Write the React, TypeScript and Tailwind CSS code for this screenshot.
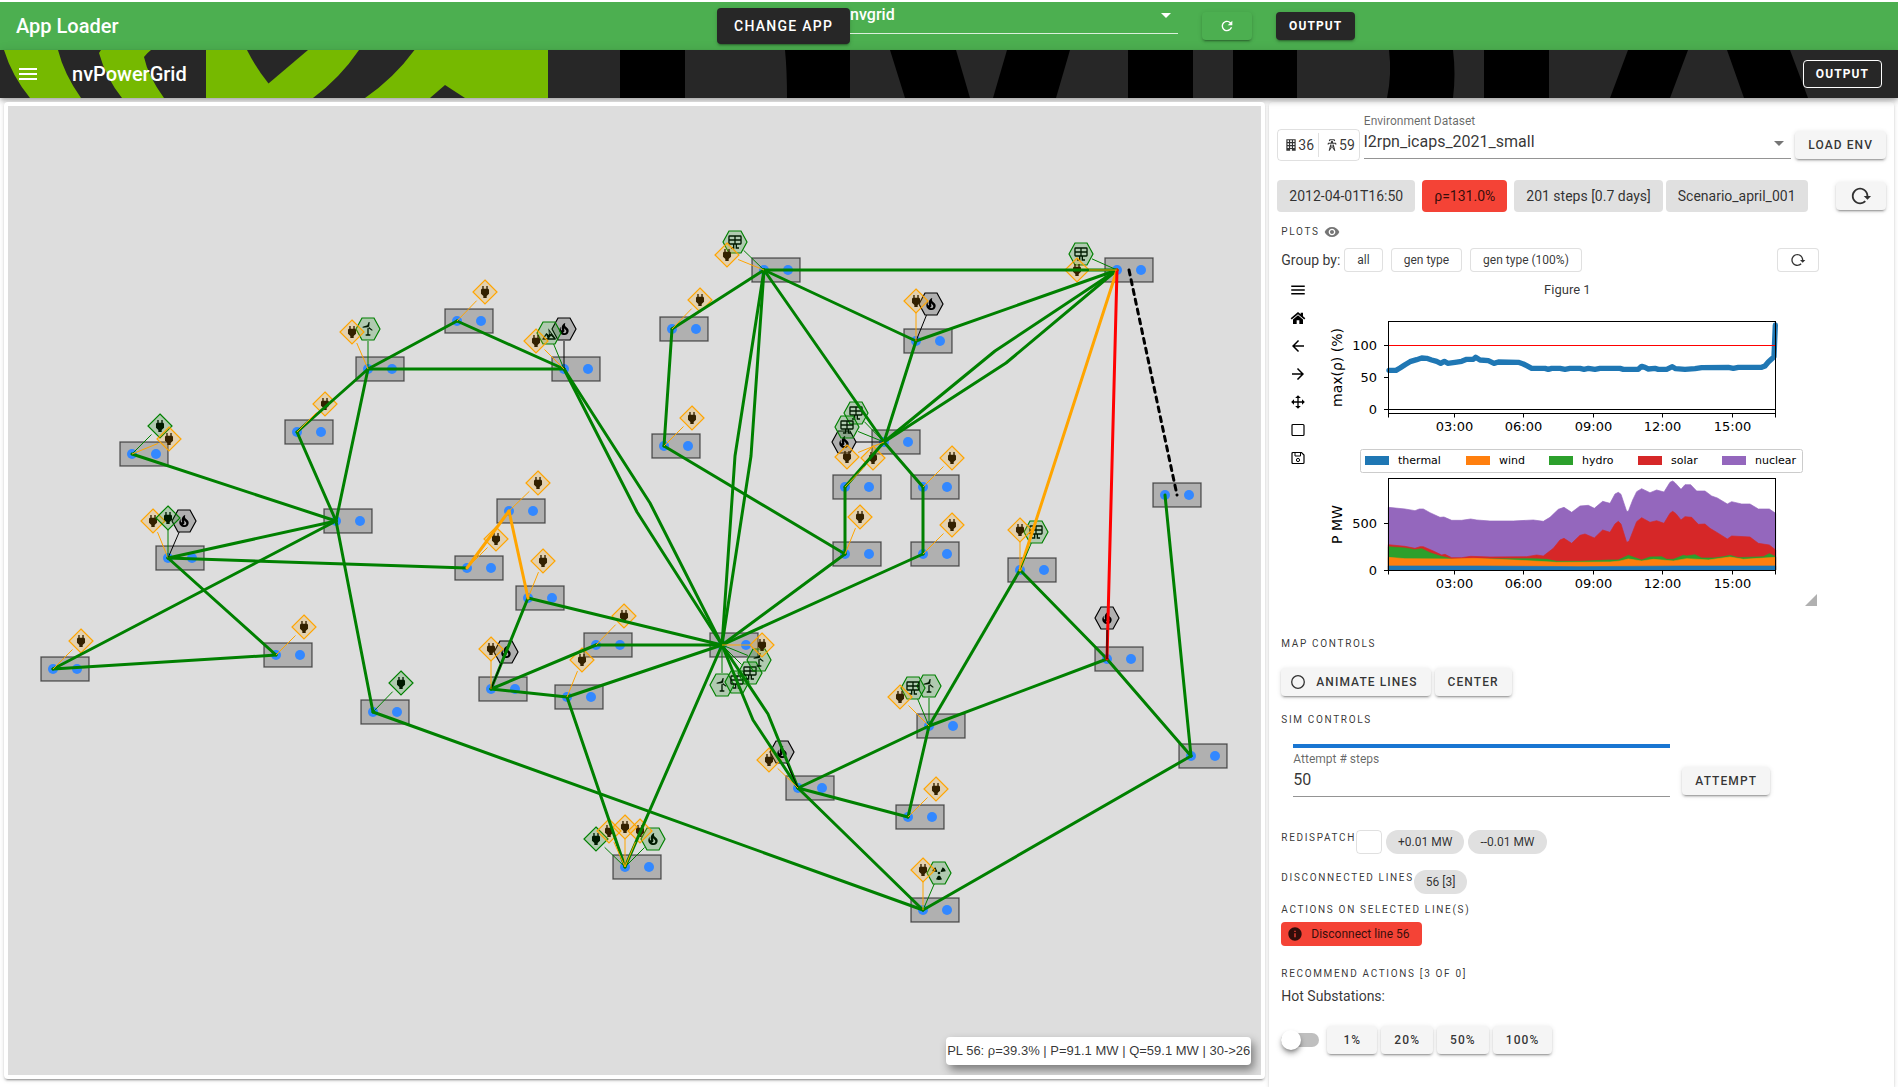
import React from "react";
import { MdRefresh, MdMenu, MdArrowDropDown, MdRemoveRedEye, MdInfo, MdArrowBack, MdArrowForward } from "react-icons/md";

type Pt = [number, number];

const RELOAD =
  "M2 12C2 16.97 6.03 21 11 21C13.39 21 15.68 20.06 17.4 18.4L15.9 16.9C14.63 18.25 12.86 19 11 19C4.76 19 1.64 11.46 6.05 7.05C10.46 2.64 18 5.77 18 12H15L19 16H19.1L23 12H20C20 7.03 15.97 3 11 3C6.03 3 2 7.03 2 12Z";
const TOWER =
  "M8.28,5.45L6.5,4.55L7.76,2H16.23L17.5,4.55L15.72,5.44L15,4H9L8.28,5.45M18.62,8H14.09L13.3,5H10.7L9.91,8H5.38L4.1,10.55L5.89,11.44L6.62,10H17.38L18.1,11.45L19.89,10.56L18.62,8M17.77,22H15.7L15.46,21.1L12,15.9L8.53,21.1L8.3,22H6.23L9.12,11H11.19L10.83,12.35L12,14.1L13.16,12.35L12.81,11H14.88L17.77,22M11.4,15L10.5,13.65L9.32,18.13L11.4,15M14.68,18.12L13.5,13.64L12.6,15L14.68,18.12Z";
const BUILDING =
  "M4,2H20V22H4V2M6,4V7H8.5V4H6M10.5,4V7H13.5V4H10.5M15.500,4V7H18V4H15.5M6,9V12H8.5V9H6M10.5,9V12H13.5V9H10.5M15.5,9V12H18V9H15.5M6,14V17H8.5V14H6M10.5,14V17H13.5V14H10.5M15.5,14V17H18V14H15.5M10.5,19V22H13.5V19H10.5Z";
const HOME =
  "M12,3L1,12.300L2.600,14.100L12,6.200L21.400,14.100L23,12.300L19.500,9.300V4H16V6.400L12,3M12,7.800L4.500,14.100V21H10V15.500H14V21H19.500V14.100L12,7.800Z";
const MOVE =
  "M13,6V11H18V7.75L22.25,12L18,16.25V13H13V18H16.25L12,22.25L7.75,18H11V13H6V16.25L1.75,12L6,7.75V11H11V6H7.75L12,1.75L16.25,6H13Z";

const PLUG = "M16,7V3H14V7H10V3H8V7H8C7,7 6,8 6,9V14.5L9.5,18V21H14.5V18L18,14.5V9C18,8 17,7 16,7Z";
const FIRE =
  "M17.66 11.2C17.43 10.9 17.15 10.64 16.89 10.38C16.22 9.78 15.46 9.35 14.82 8.72C13.33 7.26 13 4.85 13.95 3C13 3.23 12.17 3.75 11.46 4.32C8.87 6.4 7.85 10.07 9.07 13.22C9.11 13.32 9.15 13.42 9.15 13.55C9.15 13.77 9 13.97 8.8 14.05C8.57 14.15 8.33 14.09 8.14 13.93C8.08 13.88 8.04 13.83 8 13.76C6.87 12.33 6.69 10.28 7.45 8.64C5.78 10 4.87 12.3 5 14.47C5.06 14.97 5.12 15.47 5.29 15.97C5.43 16.57 5.7 17.17 6 17.7C7.08 19.43 8.95 20.67 10.96 20.92C13.1 21.19 15.39 20.8 17.03 19.32C18.86 17.66 19.5 15 18.56 12.72L18.43 12.46C18.22 12 17.66 11.2 17.66 11.2M14.5 17.5C14.22 17.74 13.76 18 13.4 18.1C12.28 18.5 11.16 17.94 10.5 17.28C11.69 17 12.4 16.12 12.61 15.23C12.78 14.43 12.46 13.77 12.33 13C12.21 12.26 12.23 11.63 12.5 10.94C12.69 11.32 12.89 11.7 13.13 12C13.9 13 15.11 13.44 15.37 14.8C15.41 14.94 15.43 15.08 15.43 15.23C15.46 16.05 15.1 16.95 14.5 17.5H14.5Z";
const SOLAR =
  "M4,2H20A2,2 0 0,1 22,4V14A2,2 0 0,1 20,16H15V20H18V22H13V16H11V22H6V20H9V16H4A2,2 0 0,1 2,14V4A2,2 0 0,1 4,2M4,4V8H11V4H4M4,14H11V10H4V14M20,14V10H13V14H20M20,4H13V8H20V4Z";
const WIND = "M14.500,1.500L13.800,8.200L11.500,9.500L4,10V8.500L11,6.500L13,1.500H14.500M13.500,9L19,13.500L18,14.500L12.500,11L13.500,9M11,11H13V20H15.500V22H8.500V20H11V11Z";
const HYDRO = "M2,21L8,12L12,15L11,5L16,12L22,20V22H2V21M5,20H10L8,15L5,20M13,9V13L15,14L13,9M12,20L19,20L15,16L12,20Z";
const NUCLEAR = "M10,12A2,2 0 1,0 14,12A2,2 0 1,0 10,12M9,10.500L2,9.500C2.500,6.500 4.500,4.500 6.500,3.500L9.500,9.500M15,10.500L22,9.500C21.500,6.500 19.500,4.500 17.500,3.500L14.500,9.500M10.500,16L7.500,21.500C10,23 14,23 16.500,21.500L13.500,16Z";

const substations: Pt[] = [
  [132, 454], [168, 558], [53, 669], [276, 655], [297, 432], [368, 369], [336, 521], [373, 712], [457, 321],
  [564, 369], [509, 511], [467, 568], [528, 598], [596, 645], [491, 689], [567, 697], [722, 645], [764, 270],
  [672, 329], [664, 446], [916, 341], [884, 442], [845, 487], [923, 487], [845, 554], [923, 554], [1117, 270],
  [1165, 495], [1020, 570], [1107, 659], [929, 726], [908, 817], [1191, 756], [923, 910], [798, 788], [625, 867],
];

const greenLines: string[] = [
  "132,454 336,521", "168,558 336,521", "168,558 467,568", "168,558 276,655", "53,669 336,521", "53,669 276,655",
  "297,432 368,369", "297,432 336,521", "368,369 336,521", "368,369 457,321", "368,369 564,369", "457,321 564,369",
  "336,521 373,712", "373,712 923,910", "564,369 637,512 722,645", "564,369 650,503 722,645",
  "764,270 735,456 722,645", "764,270 751,456 722,645", "528,598 491,689", "528,598 722,645", "596,645 491,689",
  "596,645 722,645", "491,689 567,697", "567,697 722,645", "567,697 625,867", "722,645 625,867", "722,645 845,554",
  "722,645 923,554", "722,645 753,720 798,788", "722,645 768,714 798,788", "764,270 672,329", "672,329 664,446",
  "664,446 845,554", "764,270 1117,270", "764,270 916,341", "764,270 884,442", "916,341 1117,270",
  "916,341 884,442", "884,442 995,351 1117,270", "884,442 1006,363 1117,270", "884,442 845,487", "884,442 923,487",
  "845,487 845,554", "923,487 923,554", "1165,495 1191,756", "1020,570 1107,659", "1020,570 929,726",
  "1107,659 929,726", "1107,659 1191,756", "929,726 798,788", "929,726 908,817", "908,817 798,788",
  "798,788 923,910", "1191,756 923,910",
];
const orangeLines: string[] = ["509,511 467,568", "509,511 528,598", "1117,270 1020,570"];

type Kind = "load" | "store" | "fire" | "biofire" | "solar" | "wind" | "hydro" | "nuclear";
type Marker = { kind: Kind; at: Pt; bus: number };
const m = (kind: Kind, x: number, y: number, bus: number): Marker => ({ kind, at: [x, y], bus });

const markers: Marker[] = [
  m("store", 160, 426, 0), m("load", 169, 439, 0), m("fire", 184, 521, 1), m("load", 153, 521, 1), m("store", 168, 518, 1),
  m("load", 81, 641, 2), m("load", 304, 627, 3), m("load", 325, 404, 4), m("wind", 368, 329, 5), m("load", 352, 332, 5),
  m("store", 401, 683, 7), m("load", 485, 292, 8), m("fire", 564, 329, 9), m("hydro", 549, 333, 9), m("load", 536, 341, 9),
  m("load", 538, 483, 10), m("load", 496, 539, 11), m("load", 543, 561, 12), m("load", 624, 616, 13),
  m("fire", 506, 652, 14), m("load", 491, 649, 14), m("load", 582, 660, 15), m("wind", 722, 685, 16),
  m("solar", 737, 682, 16), m("solar", 750, 673, 16), m("wind", 759, 660, 16), m("load", 762, 645, 16),
  m("solar", 735, 242, 17), m("load", 727, 255, 17), m("load", 700, 300, 18), m("load", 692, 418, 19),
  m("fire", 931, 304, 20), m("load", 916, 301, 20), m("solar", 856, 413, 21), m("fire", 844, 442, 21),
  m("solar", 847, 427, 21), m("load", 847, 457, 21), m("load", 873, 458, 22), m("load", 952, 458, 23),
  m("load", 860, 517, 24), m("load", 952, 525, 25), m("solar", 1081, 254, 26), m("load", 1077, 270, 26),
  m("solar", 1036, 532, 28), m("load", 1020, 530, 28), m("fire", 1107, 618, 29), m("wind", 929, 686, 30),
  m("solar", 913, 688, 30), m("load", 900, 697, 30), m("load", 936, 789, 31), m("nuclear", 939, 873, 33),
  m("load", 923, 870, 33), m("fire", 782, 752, 34), m("load", 769, 760, 34), m("store", 596, 839, 35),
  m("biofire", 653, 839, 35), m("load", 609, 831, 35), m("load", 640, 831, 35), m("load", 625, 827, 35),
];

const glyphs: Record<Kind, { d: string; color: string; shape: "diamond" | "hex" }> = {
  load: { d: PLUG, color: "#ffa500", shape: "diamond" },
  store: { d: PLUG, color: "#008000", shape: "diamond" },
  fire: { d: FIRE, color: "#000000", shape: "hex" },
  biofire: { d: FIRE, color: "#008000", shape: "hex" },
  solar: { d: SOLAR, color: "#008000", shape: "hex" },
  wind: { d: WIND, color: "#008000", shape: "hex" },
  hydro: { d: HYDRO, color: "#008000", shape: "hex" },
  nuclear: { d: NUCLEAR, color: "#008000", shape: "hex" },
};

function MarkerShape({ kind, at }: Marker) {
  const g = glyphs[kind];
  const points = g.shape === "diamond" ? "0,-12 12,0 0,12 -12,0" : "-12,0 -6,-11 6,-11 12,0 6,11 -6,11";
  return (
    <g transform={`translate(${at[0]} ${at[1]})`}>
      <path d={g.d} fill="#000" transform="scale(0.67) translate(-12 -12)" />
      <polygon points={points} fill={g.color} fillOpacity={0.2} stroke={g.color} strokeWidth={1.2} />
    </g>
  );
}

function Connector({ kind, at, bus }: Marker) {
  const [bx, by] = substations[bus];
  const dx = bx - at[0];
  const dy = by - at[1];
  const len = Math.hypot(dx, dy);
  const k = 12 / len;
  return (
    <line x1={at[0] + dx * k} y1={at[1] + dy * k} x2={bx} y2={by} stroke={glyphs[kind].color} strokeWidth={1} />
  );
}

function GridMap() {
  return (
    <svg className="absolute inset-0 size-full" role="img" aria-label="Power grid map">
      <g transform="translate(-8 -106)">
        {substations.map(([x, y]) => (
          <g key={`${x}-${y}`}>
            <rect x={x - 12} y={y - 12} width={48} height={24} fill="#000" fillOpacity={0.2} stroke="#000" strokeOpacity={0.6} strokeWidth={1.3} />
            <circle cx={x} cy={y} r={5} fill="#3388ff" />
            <circle cx={x + 24} cy={y} r={5} fill="#3388ff" />
          </g>
        ))}
        {markers.map((k, i) => (
          <MarkerShape key={i} {...k} />
        ))}
        {greenLines.map((p) => (
          <polyline key={p} points={p} fill="none" stroke="#008000" strokeWidth={3} strokeLinejoin="round" strokeLinecap="round" />
        ))}
        {orangeLines.map((p) => (
          <polyline key={p} points={p} fill="none" stroke="#ffa500" strokeWidth={3} strokeLinecap="round" />
        ))}
        <line x1={1117} y1={270} x2={1107} y2={659} stroke="#ff0000" strokeWidth={3} strokeLinecap="round" />
        <line x1={1129} y1={270} x2={1177} y2={495} stroke="#000" strokeWidth={3} strokeDasharray="5 5" strokeLinecap="round" />
        {markers.map((k, i) => (
          <Connector key={i} {...k} />
        ))}
      </g>
    </svg>
  );
}

const rhoLine =
  "27,211 48,211 60,204 75,194 90,185 110,179 125,174 140,175 155,180 170,184 182,190 193,184 203,190 225,187 245,184 260,178 280,178 287,172 300,180 325,182 342,190 355,186 415,187 430,192 440,197 455,205 495,205 505,208 515,205 540,205 555,208 570,205 600,205 612,208 625,205 645,208 660,205 720,205 730,208 775,208 785,199 795,202 805,207 825,205 835,208 860,208 877,200 887,206 915,208 945,206 965,203 1045,202 1060,205 1075,202 1145,202 1155,198 1165,186 1178,174 1182,170 1186,75";

const areas: { name: string; color: string; top: string }[] = [
  {
    name: "nuclear",
    color: "#9467bd",
    top: "25,622 75,627 105,632 118,627 130,627 150,638 180,652 192,651 215,661 245,661 272,657 290,660 330,663 400,663 460,660 490,664 510,652 535,628 552,622 575,637 600,618 625,616 643,625 668,604 690,610 705,582 715,577 723,583 740,634 745,634 758,600 770,575 785,566 810,578 830,570 852,576 870,547 878,543 885,548 903,568 915,554 932,554 950,573 975,573 995,588 1012,594 1042,612 1055,605 1085,612 1110,612 1135,627 1168,627 1187,640",
  },
  {
    name: "solar",
    color: "#d62728",
    top: "25,734 75,739 105,745 120,740 130,740 160,753 185,765 195,763 215,773 245,773 272,769 330,771 440,770 470,765 490,768 520,745 540,720 552,715 575,730 600,706 615,702 643,714 668,690 690,697 705,672 715,664 723,672 740,727 747,724 770,665 785,653 810,667 830,662 852,670 870,640 878,634 888,641 903,660 915,650 935,652 955,673 975,672 990,685 1012,698 1042,717 1055,708 1110,711 1135,730 1168,735 1187,750",
  },
  {
    name: "hydro",
    color: "#2ca02c",
    top: "25,740 75,744 105,749 125,746 150,758 180,768 205,774 215,778 400,776 460,776 500,778 530,784 600,784 690,780 715,780 745,766 765,773 785,780 810,771 845,770 860,778 880,778 910,766 920,768 945,764 965,774 1000,774 1030,770 1050,766 1075,773 1150,770 1168,761 1187,770",
  },
  {
    name: "wind",
    color: "#ff7f0e",
    top: "25,772 75,776 215,777 280,775 420,781 530,787 690,786 720,783 745,777 785,783 820,778 880,783 920,776 985,780 1050,771 1090,778 1187,772",
  },
  { name: "thermal", color: "#1f77b4", top: "25,798 300,798 600,800 900,798 1187,798" },
];

const legend: { name: string; color: string; x: number }[] = [
  { name: "thermal", color: "#1f77b4", x: 49 },
  { name: "wind", color: "#ff7f0e", x: 150 },
  { name: "hydro", color: "#2ca02c", x: 233 },
  { name: "solar", color: "#d62728", x: 322 },
  { name: "nuclear", color: "#9467bd", x: 406 },
];

const hours: { label: string; x: number }[] = [
  { label: "03:00", x: 138.5 },
  { label: "06:00", x: 207.5 },
  { label: "09:00", x: 277.5 },
  { label: "12:00", x: 346.5 },
  { label: "15:00", x: 416.5 },
];

function Axes({ top, bottom, ticks, label, labelX }: { top: number; bottom: number; ticks: { v: string; y: number }[]; label: string; labelX: number }) {
  const mid = (top + bottom) / 2;
  return (
    <g>
      <rect x={72.5} y={top} width={387} height={bottom - top} fill="none" stroke="#000" />
      {[{ label: "", x: 72.5 }, ...hours, { label: "", x: 459.5 }].map((h) => (
        <g key={h.x}>
          <line x1={h.x} x2={h.x} y1={bottom} y2={bottom + 4} stroke="#000" />
          <text x={h.x} y={bottom + 17} textAnchor="middle">{h.label}</text>
        </g>
      ))}
      {ticks.map((t) => (
        <g key={t.v}>
          <line x1={68} x2={72} y1={t.y} y2={t.y} stroke="#000" />
          <text x={61} y={t.y + 4} textAnchor="end">{t.v}</text>
        </g>
      ))}
      <text textAnchor="middle" className="text-sm" transform={`translate(${labelX} ${mid}) rotate(-90)`}>{label}</text>
    </g>
  );
}

function Figure() {
  return (
    <svg width={502} height={306} className="block font-['DejaVu_Sans',sans-serif] text-[13px]" role="img" aria-label="Line load and production plots">
      <g transform="translate(64 0) scale(0.33333)">
        <polyline points={rhoLine} fill="none" stroke="#1f77b4" strokeWidth={16} strokeLinejoin="round" strokeLinecap="round" />
        {areas.map((a) => (
          <polygon key={a.name} points={`25,810 ${a.top} 1187,810`} fill={a.color} stroke={a.color} strokeWidth={2} strokeLinejoin="round" />
        ))}
      </g>
      <line x1={73} x2={459} y1={45.5} y2={45.5} stroke="#f00" />
      <line x1={73} x2={459} y1={109.5} y2={109.5} stroke="#000" />
      <Axes top={21.5} bottom={113.5} label="max(ρ) (%)" labelX={26} ticks={[{ v: "100", y: 45.5 }, { v: "50", y: 77.5 }, { v: "0", y: 109.5 }]} />
      <Axes top={178.5} bottom={270.5} label="P MW" labelX={26} ticks={[{ v: "500", y: 223.5 }, { v: "0", y: 270.5 }]} />
      <rect x={44.5} y={149.5} width={442} height={23} rx={2} fill="#fff" stroke="#ccc" />
      {legend.map((l) => (
        <g key={l.name}>
          <rect x={l.x} y={156} width={24} height={9} fill={l.color} />
          <text x={l.x + 33} y={164} className="text-[11px]">{l.name}</text>
        </g>
      ))}
      <polygon points="501,294 501,306 489,306" fill="#b0b0b0" />
    </svg>
  );
}

function Icon({ d, className }: { d: string; className: string }) {
  return (
    <svg viewBox="0 0 24 24" className={className} fill="currentColor" fillRule="evenodd" aria-hidden="true">
      <path d={d} />
    </svg>
  );
}

const raised = "shadow-[0_3px_1px_-2px_rgba(0,0,0,0.2),0_2px_2px_0_rgba(0,0,0,0.14),0_1px_5px_0_rgba(0,0,0,0.12)]";

function Btn({ children, className = "px-[13px]", label }: { children: React.ReactNode; className?: string; label?: string }) {
  return (
    <button type="button" aria-label={label} className={`flex h-7 shrink-0 items-center justify-center rounded bg-[#f5f5f5] text-xs font-medium tracking-[0.09em] ${raised} ${className}`}>
      {children}
    </button>
  );
}

function Overline({ children }: { children: React.ReactNode }) {
  return <h2 className="h-4 shrink-0 text-[10px] leading-4 tracking-[0.1666em] uppercase">{children}</h2>;
}

function Brand() {
  return (
    <svg className="absolute inset-0 size-full" aria-hidden="true">
      <g fill="#76b900">
        <path d="M4,0Q12,26 30,48H81Q64,24 58,0Z" />
        <path d="M101,0L99,3Q106,28 122,48H164Q148,26 144,7Q147,3 151,0Z" />
        <path d="M206,0H548V48H206Z" />
      </g>
      <g fill="#272727">
        <path d="M247,0H308L268.500,33.500Q256,18 247,0Z" />
        <path d="M359,0H414.500Q394,28 365,48H313Q340,28 359,0Z" />
        <path d="M445,35L465,48H430Z" />
      </g>
      <g fill="#000">
        <path d="M620,0H685V48H620Z" />
        <path d="M785,0H850V48H787Q787,20 785,0Z" />
        <path d="M890,0H956L970,48H905Z" />
        <path d="M1007,0H1070L1056,48H993Z" />
        <path d="M1128,0H1193V48H1128Z" />
        <path d="M1233,0H1297V48H1233Z" />
        <path d="M1389,0H1453Q1456,24 1453,48H1387Q1392,24 1389,0Z" />
        <path d="M1484,0H1549V48H1484Z" />
        <path d="M1628,0H1688L1670,48H1610Z" />
        <path d="M1727,0H1790L1808,48H1744Z" />
      </g>
    </svg>
  );
}

const chip = "flex h-8 items-center rounded px-3 text-sm whitespace-nowrap";
const smallOutlined = "flex h-6 items-center justify-center rounded border border-black/12 bg-white px-3 text-xs whitespace-nowrap";
const pill = "flex h-6 items-center rounded-full bg-[#e0e0e0] px-3 text-xs whitespace-nowrap";

export default function App() {
  return (
    <div className="flex min-h-screen flex-col bg-white pt-0.5 font-['Roboto',sans-serif] text-black/80">
      <header className="flex h-12 shrink-0 items-center bg-[#4caf50] px-4 text-white">
        <h1 className="w-[701px] shrink-0 text-xl font-medium">App Loader</h1>
        <button type="button" className={`h-9 shrink-0 rounded bg-[#272727] px-[17px] text-sm font-medium tracking-[0.09em] whitespace-nowrap ${raised}`}>CHANGE APP</button>
        <div className="relative mb-5 w-[328px] shrink-0">
          <select aria-label="App" defaultValue="nvgrid" className="block h-9 w-full appearance-none border-b border-white/80 bg-transparent pb-0.5 text-base font-medium outline-none">
            <option>nvgrid</option>
          </select>
          <MdArrowDropDown className="pointer-events-none absolute top-[5px] right-0 size-6" />
        </div>
        <button type="button" aria-label="Refresh" className={`ml-6 flex h-7 w-[50px] items-center justify-center rounded bg-[#4caf50] ${raised}`}>
          <MdRefresh className="size-4" />
        </button>
        <button type="button" className={`ml-6 h-7 rounded bg-[#272727] px-[13px] text-xs font-bold tracking-[0.09em] ${raised}`}>OUTPUT</button>
      </header>

      <header className="relative flex h-12 shrink-0 items-center bg-[#272727] px-4 text-white shadow-[0_2px_4px_-1px_rgba(0,0,0,0.2),0_4px_5px_0_rgba(0,0,0,0.14),0_1px_10px_0_rgba(0,0,0,0.12)]">
        <Brand />
        <button type="button" aria-label="Menu" className="relative">
          <MdMenu className="size-6" />
        </button>
        <h1 className="relative ml-8 text-xl font-medium">nvPowerGrid</h1>
        <button type="button" className="relative ml-auto h-7 rounded border border-white bg-[#272727] px-3 text-xs font-bold tracking-[0.09em]">OUTPUT</button>
      </header>

      <div className="grid flex-1 grid-cols-[2fr_1fr] pt-1">
        <main className={`relative z-0 mb-2 ml-1 flex rounded bg-white p-1 ${raised}`}>
          <div className="relative flex-1 overflow-hidden bg-[#ddd]">
            <GridMap />
            <div className="absolute right-2.5 bottom-2.5 flex h-7 items-center rounded bg-white px-px font-['Liberation_Sans',sans-serif] text-[13px] whitespace-nowrap shadow-[3px_5px_10px_rgba(0,0,0,0.45)]">
              PL 56: ρ=39.3% | P=91.1 MW | Q=59.1 MW | 30-&gt;26
            </div>
          </div>
        </main>

        <aside className={`mx-1 flex flex-col rounded-t bg-white px-2 pt-[13px] pb-8 ${raised}`}>
          <div className="flex items-end gap-1">
            <div className="flex h-8 shrink-0 items-center rounded border border-black/12 text-sm">
              <span className="flex items-center pr-1 pl-1.5"><Icon d={BUILDING} className="size-3.5" />36</span>
              <span className="flex h-6 items-center border-l border-black/12 pr-1 pl-1.5"><Icon d={TOWER} className="size-3.5" />59</span>
            </div>
            <div className="relative mb-0.5 flex-1">
              <label htmlFor="dataset" className="block h-3 text-xs leading-3 text-black/60">Environment Dataset</label>
              <select id="dataset" defaultValue="l2rpn_icaps_2021_small" className="block h-8 w-full appearance-none border-b border-black/42 bg-transparent pb-0.5 text-base outline-none">
                <option>l2rpn_icaps_2021_small</option>
              </select>
              <MdArrowDropDown className="pointer-events-none absolute top-4 right-0 size-6 text-black/54" />
            </div>
            <div className="mb-0.5"><Btn>LOAD ENV</Btn></div>
          </div>

          <div className="mt-[19px] flex items-center">
            <span className={`${chip} bg-[#e0e0e0]`}>2012-04-01T16:50</span>
            <span className={`${chip} ml-[7px] bg-[#f44336]`}>ρ=131.0%</span>
            <span className={`${chip} ml-[7px] bg-[#e0e0e0]`}>201 steps [0.7 days]</span>
            <span className={`${chip} ml-[3px] bg-[#e0e0e0]`}>Scenario_april_001</span>
            <div className="ml-auto">
              <Btn label="Reload scenario" className="w-[50px]"><Icon d={RELOAD} className="size-[22px]" /></Btn>
            </div>
          </div>

          <div className="flex flex-col pl-1">
            <div className="mt-3 flex h-4 items-center gap-1">
              <Overline>Plots</Overline>
              <MdRemoveRedEye className="size-4 text-black/54" />
            </div>

            <div className="mt-2 flex max-w-[538px] items-center gap-2">
              <span className="-mr-1 text-sm">Group by:</span>
              <button type="button" className={smallOutlined}>all</button>
              <button type="button" className={smallOutlined}>gen type</button>
              <button type="button" className={smallOutlined}>gen type (100%)</button>
              <button type="button" aria-label="Reload plots" className={`${smallOutlined} ml-auto`}><Icon d={RELOAD} className="size-4" /></button>
            </div>

            <div className="mt-1 flex">
              <div className="flex w-[34px] shrink-0 flex-col items-center text-black">
                <button type="button" aria-label="Menu" className="flex h-7 items-center"><MdMenu className="size-[18px]" /></button>
                <button type="button" aria-label="Home" className="flex h-7 items-center"><Icon d={HOME} className="size-4" /></button>
                <button type="button" aria-label="Back" className="flex h-7 items-center"><MdArrowBack className="size-[18px]" /></button>
                <button type="button" aria-label="Forward" className="flex h-7 items-center"><MdArrowForward className="size-[18px]" /></button>
                <button type="button" aria-label="Pan" className="flex h-7 items-center"><Icon d={MOVE} className="size-4" /></button>
                <button type="button" aria-label="Zoom" className="flex h-7 items-center">
                  <svg viewBox="0 0 16 16" className="size-4" fill="none" stroke="currentColor" aria-hidden="true"><rect x="2" y="2.500" width="12" height="11" rx="1" strokeWidth="1.200" /></svg>
                </button>
                <button type="button" aria-label="Save" className="flex h-7 items-center">
                  <svg viewBox="0 0 16 16" className="size-4" fill="none" stroke="currentColor" aria-hidden="true">
                    <path d="M2,3.500Q2,2.500 3,2.500H11.500L14,5V12.500Q14,13.500 13,13.500H3Q2,13.500 2,12.500Z" strokeWidth="1.200" />
                    <path d="M5,2.500V6H10.500V2.500" />
                    <circle cx="8" cy="10" r="1.600" />
                  </svg>
                </button>
              </div>
              <div className="ml-px">
                <p className="h-6 text-center text-[13px] leading-7">Figure 1</p>
                <Figure />
              </div>
            </div>

            <div className="mt-[30px]"><Overline>Map controls</Overline></div>
            <div className="mt-4 flex gap-1">
              <Btn>
                <svg viewBox="0 0 16 16" className="-ml-1 mr-2.5 size-4" fill="none" stroke="currentColor" aria-hidden="true"><circle cx="8" cy="8" r="6.300" strokeWidth="1.300" /></svg>
                ANIMATE LINES
              </Btn>
              <Btn>CENTER</Btn>
            </div>

            <div className="mt-4"><Overline>Sim controls</Overline></div>
            <div className="mt-4 flex items-end pl-3">
              <div className="w-[377px]">
                <div className="h-1 bg-[#1976d2]" />
                <label htmlFor="steps" className="mt-[5px] block h-3 text-xs leading-3 text-black/60">Attempt # steps</label>
                <input id="steps" type="text" defaultValue="50" className="block h-8 w-full border-b border-black/42 bg-transparent pb-0.5 text-base outline-none" />
              </div>
              <div className="mb-0.5 ml-3"><Btn>ATTEMPT</Btn></div>
            </div>

            <div className="mt-[33px] flex items-start">
              <Overline>Redispatch</Overline>
              <span className="h-6 w-[26px] rounded border border-black/12" />
              <button type="button" className={`${pill} ml-1`}>+0.01 MW</button>
              <button type="button" className={`${pill} ml-1`}>--0.01 MW</button>
            </div>

            <div className="mt-4 flex items-start">
              <Overline>Disconnected lines</Overline>
              <button type="button" className={pill}>56 [3]</button>
            </div>

            <div className="mt-2"><Overline>Actions on selected line(s)</Overline></div>
            <div className="mt-1 flex">
              <button type="button" className="flex h-6 items-center rounded bg-[#f44336] pr-3 pl-1.5 text-xs">
                <MdInfo className="mr-2 size-4" />
                Disconnect line 56
              </button>
            </div>

            <div className="mt-5"><Overline>Recommend actions [3 of 0]</Overline></div>
            <p className="mt-1 h-5 text-sm leading-5">Hot Substations:</p>

            <div className="mt-5 flex items-center gap-1">
              <input
                type="checkbox"
                aria-label="Recommend automatically"
                className="relative mr-1 h-3.5 w-[38px] appearance-none rounded-full bg-black/25 before:absolute before:-top-[3px] before:left-0 before:size-5 before:rounded-full before:bg-white before:shadow-md before:shadow-black/40"
              />
              <Btn className="w-[50px]">1%</Btn>
              <Btn>20%</Btn>
              <Btn>50%</Btn>
              <Btn>100%</Btn>
            </div>
          </div>
        </aside>
      </div>
    </div>
  );
}
